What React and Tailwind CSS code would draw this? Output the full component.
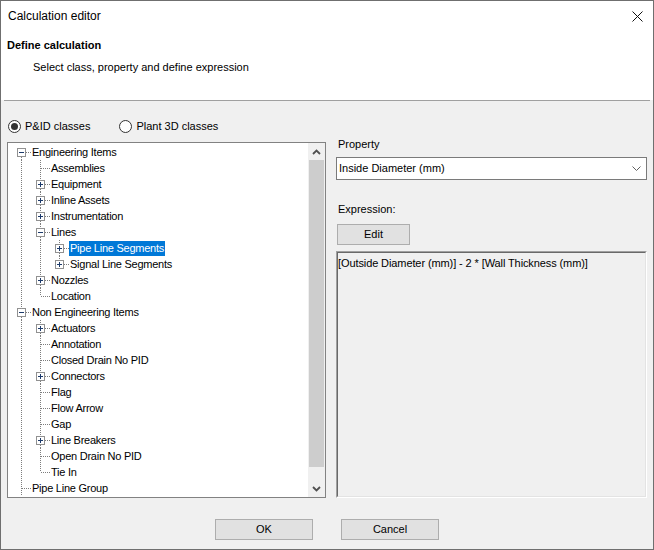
import React from 'react'

const LINE = '#7d7d7d'

// tree rows as shown: level, kind ('+', '-', or null for a leaf), first root, last sibling
const ROWS = [
  { label: 'Engineering Items', level: 0, box: '-', first: true, guides: [] },
  { label: 'Assemblies', level: 1, guides: [true] },
  { label: 'Equipment', level: 1, box: '+', guides: [true] },
  { label: 'Inline Assets', level: 1, box: '+', guides: [true] },
  { label: 'Instrumentation', level: 1, box: '+', guides: [true] },
  { label: 'Lines', level: 1, box: '-', guides: [true] },
  { label: 'Pipe Line Segments', level: 2, box: '+', guides: [true, true], selected: true },
  { label: 'Signal Line Segments', level: 2, box: '+', last: true, guides: [true, true] },
  { label: 'Nozzles', level: 1, box: '+', guides: [true] },
  { label: 'Location', level: 1, last: true, guides: [true] },
  { label: 'Non Engineering Items', level: 0, box: '-', guides: [] },
  { label: 'Actuators', level: 1, box: '+', guides: [true] },
  { label: 'Annotation', level: 1, guides: [true] },
  { label: 'Closed Drain No PID', level: 1, guides: [true] },
  { label: 'Connectors', level: 1, box: '+', guides: [true] },
  { label: 'Flag', level: 1, guides: [true] },
  { label: 'Flow Arrow', level: 1, guides: [true] },
  { label: 'Gap', level: 1, guides: [true] },
  { label: 'Line Breakers', level: 1, box: '+', guides: [true] },
  { label: 'Open Drain No PID', level: 1, guides: [true] },
  { label: 'Tie In', level: 1, last: true, guides: [true] },
  { label: 'Pipe Line Group', level: 0, guides: [] },
]

function Guide({ on }) {
  return (
    <svg width="19" height="16" className="shrink-0 block">
      {on && <line x1="9.5" y1="0" x2="9.5" y2="16" stroke={LINE} strokeDasharray="1 1" />}
    </svg>
  )
}

function Node({ box, first, last }) {
  const topEnd = box ? 4 : 8
  const botStart = box ? 13 : 8
  const hStart = box ? 14 : 10
  return (
    <svg width="19" height="16" className="shrink-0 block">
      {!first && <line x1="9.5" y1="0" x2="9.5" y2={topEnd} stroke={LINE} strokeDasharray="1 1" />}
      {!last && <line x1="9.5" y1={botStart} x2="9.5" y2="16" stroke={LINE} strokeDasharray="1 1" />}
      <line x1={hStart} y1="8.5" x2="19" y2="8.5" stroke={LINE} strokeDasharray="1 1" />
      {box && (
        <g shapeRendering="crispEdges">
          <rect x="5.5" y="4.5" width="8" height="8" fill="#fff" stroke="#919191" />
          <line x1="7" y1="8.5" x2="12" y2="8.5" stroke="#1c3a6b" />
          {box === '+' && <line x1="9.5" y1="6" x2="9.5" y2="11" stroke="#1c3a6b" />}
        </g>
      )}
    </svg>
  )
}

function TreeRow({ row }) {
  return (
    <div className="flex h-[16px] items-center">
      {row.guides.map((on, i) => (
        <Guide key={i} on={on} />
      ))}
      <Node box={row.box} first={row.first} last={row.last} />
      <span
        className={`h-[15px] leading-[15px] px-px whitespace-nowrap tracking-[-0.25px] ${
          row.selected ? 'bg-[#0078d7] text-white' : 'text-black'
        }`}
      >
        {row.label}
      </span>
    </div>
  )
}

function Radio({ checked, label }) {
  return (
    <label className="flex items-center gap-[4px]">
      <span className="w-[13px] h-[13px] rounded-full border border-[#333] bg-white flex items-center justify-center">
        {checked && <span className="w-[7px] h-[7px] rounded-full bg-[#333]" />}
      </span>
      <span>{label}</span>
    </label>
  )
}

function Chevron({ up, className }) {
  return (
    <svg width="9" height="6" viewBox="0 0 9 6" className={className}>
      <polyline
        points={up ? '1,5 4.5,1.5 8,5' : '1,1 4.5,4.5 8,1'}
        fill="none"
        stroke="#505050"
        strokeWidth="1.8"
      />
    </svg>
  )
}

function Button({ children, className }) {
  return (
    <button className={`h-[21px] bg-[#e1e1e1] border border-[#adadad] text-black text-[11px] ${className}`}>
      {children}
    </button>
  )
}

export default function App() {
  return (
    <div className="w-[654px] h-[550px] flex flex-col border border-[#6f6f6f] bg-[#f0f0f0] text-[11px] text-black font-['Liberation_Sans',Arial,sans-serif] overflow-hidden">
      {/* Header */}
      <div className="h-[99px] bg-white flex flex-col shrink-0">
        <div className="h-[30px] flex items-center justify-between pl-[7px] pr-[10px]">
          <span className="text-[12px]">Calculation editor</span>
          <svg width="11" height="11" viewBox="0 0 11 11">
            <path d="M0.5 0.5 L10.5 10.5 M10.5 0.5 L0.5 10.5" stroke="#111" strokeWidth="1" />
          </svg>
        </div>
        <div className="mt-[7px] pl-[6px] font-bold leading-[14px]">Define calculation</div>
        <div className="mt-[8px] pl-[32px] leading-[14px]">Select class, property and define expression</div>
      </div>
      <div className="h-px mx-[3px] bg-[#a0a0a0] shrink-0" />

      {/* Body */}
      <div className="flex flex-col px-[6px] pt-[17px]">
        <div className="h-[16px] flex items-center gap-[29px] pl-[1px]">
          <Radio checked label="P&ID classes" />
          <Radio label="Plant 3D classes" />
        </div>

        <div className="flex gap-[10px] mt-[2px]">
          {/* Tree */}
          <div className="mt-[6px] w-[319px] h-[356px] border border-[#828282] bg-white flex shrink-0">
            <div className="flex-1 overflow-hidden pt-[1px] pl-[4px]">
              {ROWS.map((row, i) => (
                <TreeRow key={i} row={row} />
              ))}
            </div>
            <div className="w-[17px] bg-[#f0f0f0] flex flex-col">
              <div className="h-[17px] flex items-center justify-center">
                <Chevron up />
              </div>
              <div className="flex-1">
                <div className="h-[307px] mx-px bg-[#cdcdcd]" />
              </div>
              <div className="h-[17px] flex items-center justify-center">
                <Chevron />
              </div>
            </div>
          </div>

          {/* Right column */}
          <div className="w-[311px] flex flex-col">
            <div className="h-[16px] leading-[16px] pl-[2px]">Property</div>
            <div className="mt-[5px] h-[23px] border border-[#7a7a7a] bg-white flex items-center justify-between pl-[2px] pr-[5px]">
              <span>Inside Diameter (mm)</span>
              <svg width="9" height="6" viewBox="0 0 9 6">
                <polyline points="0.5,0.5 4.5,4.5 8.5,0.5" fill="none" stroke="#606060" strokeWidth="1" />
              </svg>
            </div>
            <div className="mt-[21px] h-[16px] leading-[16px] pl-[2px]">Expression:</div>
            <Button className="mt-[7px] w-[73px] ml-[1px]">Edit</Button>
            <div className="mt-[6px] h-[247px] border border-t-[#a0a0a0] border-l-[#a0a0a0] border-b-white border-r-white">
              <div className="h-full border border-t-[#696969] border-l-[#696969] border-b-[#e3e3e3] border-r-[#e3e3e3] bg-[#f0f0f0] pt-[3px] leading-[14px] tracking-[-0.1px]">
                [Outside Diameter (mm)] - 2 * [Wall Thickness (mm)]
              </div>
            </div>
          </div>
        </div>

        <div className="mt-[21px] flex justify-center gap-[28px]">
          <Button className="w-[98px]">OK</Button>
          <Button className="w-[98px]">Cancel</Button>
        </div>
      </div>
    </div>
  )
}
